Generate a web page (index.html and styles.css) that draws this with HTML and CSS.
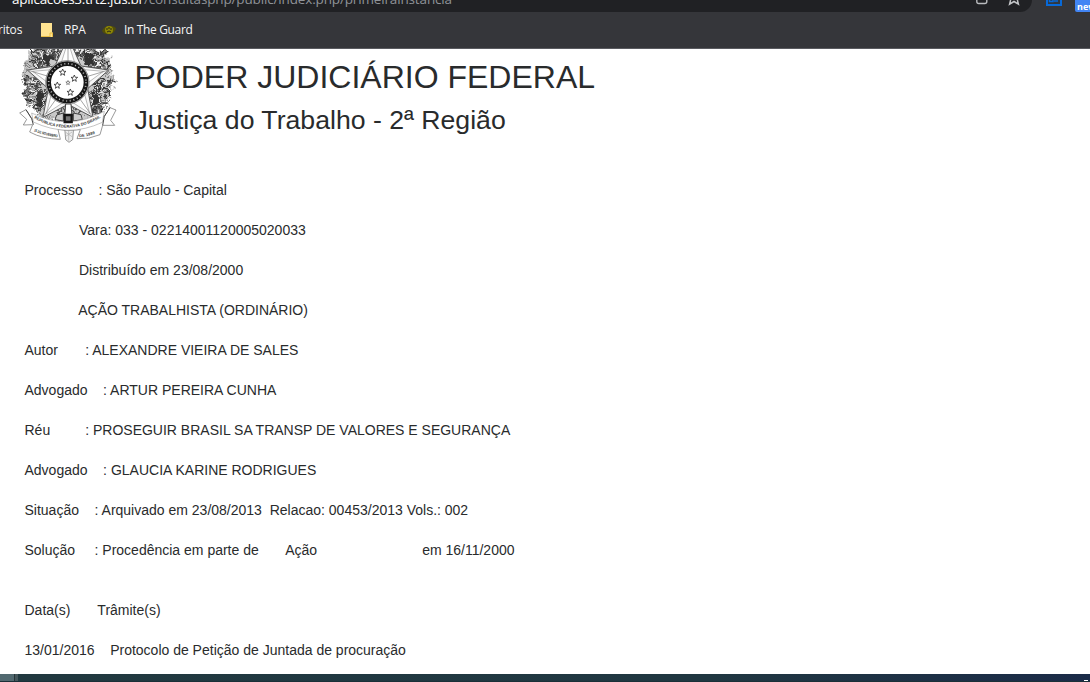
FILE: index.html
```html
<!DOCTYPE html>
<html lang="pt-BR">
<head>
<meta charset="utf-8">
<title>Consulta de Processos</title>
<link rel="stylesheet" href="styles.css">
</head>
<body>
<header class="browser">
  <div class="toolbar">
    <div class="omnibox">
      <div class="url"><span class="host">aplicacoes3.trt2.jus.br</span><span class="path">/consultasphp/public/index.php/primeirainstancia</span></div>
      <svg class="omni-icons" width="60" height="12" viewBox="0 0 60 12"><path d="M3.800 0v1.500q0 2 2 2h6q2 0 2-2V0" fill="none" stroke="#b9bbbe" stroke-width="1.400"/><path d="M37.600 0l-1 4.200 4.400-2.700 4.400 2.700-1-4.200" fill="none" stroke="#c2c4c7" stroke-width="1.500"/></svg>
    </div>
    <svg class="ext" width="16" height="6" viewBox="0 0 16 6"><path d="M0 0h16v6H0z" fill="#0869d8"/><path d="M2 0h12v4H2z" fill="#303841"/><path d="M3.500 0v1.500h3.500V0M9 0v2M11 0v2" stroke="#0869d8" stroke-width="1.500" fill="none"/></svg>
    <div class="new-badge">new</div>
  </div>
  <nav class="bookmarks">
    <span class="bm bm-cut">ritos</span>
    <svg class="folder" width="13" height="14" viewBox="0 0 13 14"><path d="M0 0h11v9.500h1V14H0z" fill="#ffe391"/><path d="M0 13.500h9M9 14V10h2.500V14" stroke="#e9bd45" fill="none"/></svg>
    <span class="bm bm-rpa">RPA</span>
    <svg class="guard" width="14" height="10" viewBox="0 0 14 10"><path d="M0 6Q2 1 7 .8T14 3.500Q12 9 7 9.200T0 6z" fill="#514e0a"/><circle cx="7" cy="5" r="4" fill="#8c8508"/><path d="M4 4h2M8 4h2M5 7l2-1 2 1M7 2v2" stroke="#292a15" fill="none"/></svg>
    <span class="bm bm-guard">In The Guard</span>
  </nav>
</header>
<main class="page">
  <div class="brand">
    <svg class="crest" width="116" height="99" viewBox="0 15 348 297">
      <defs>
        <path id="motto" d="M72 222Q174 283 280 216"/>
        <path id="dateL" d="M71 262Q107 276 148 281"/>
        <path id="dateR" d="M208 280Q235 278 268 264"/>
        <path id="s" d="M0-10L3-3 10-3 4 2 6 9 0 5-6 9-4 2-10-3-3-3z"/>
        <g id="leaf"><path d="M0-83Q20-101 5-134Q-18-108 0-83z" fill="#777" stroke="#333" stroke-width="4"/><path d="M0-87L3-119M-8-105L2-99 12-108" stroke="#eee" stroke-width="4" fill="none"/></g>
        <filter id="rough" x="-10%" y="-10%" width="120%" height="120%"><feTurbulence type="fractalNoise" baseFrequency=".05" numOctaves="2" seed="4"/><feDisplacementMap in="SourceGraphic" scale="42" xChannelSelector="R" yChannelSelector="G"/></filter>
      </defs>
      <g filter="url(#rough)">
      <g fill="none">
        <path d="M52 20H292L310 90 282 180 246 225H102L60 178 38 90z" fill="#c9c9c9"/>
        <circle cx="174" cy="112" r="128" stroke="#777" stroke-width="20" stroke-dasharray="3 6"/>
        <circle cx="174" cy="112" r="88" stroke="#555" stroke-width="30" stroke-dasharray="8 6 5 7"/>
      </g>
      <g transform="translate(174 112)">
        <use href="#leaf" transform="rotate(22)"/><use href="#leaf" transform="rotate(36)"/><use href="#leaf" transform="rotate(49) scale(1.080)"/><use href="#leaf" transform="rotate(62)"/>
        <use href="#leaf" transform="rotate(91)"/><use href="#leaf" transform="rotate(105)"/><use href="#leaf" transform="rotate(119)"/><use href="#leaf" transform="rotate(132)"/>
        <use href="#leaf" transform="rotate(-22)"/><use href="#leaf" transform="rotate(-36)"/><use href="#leaf" transform="rotate(-49) scale(1.080)"/><use href="#leaf" transform="rotate(-62)"/>
        <use href="#leaf" transform="rotate(-91)"/><use href="#leaf" transform="rotate(-105)"/><use href="#leaf" transform="rotate(-119)"/><use href="#leaf" transform="rotate(-132)"/>
      </g>
      <path d="M96 38l28-12 8 22-24 16zM85 150l20 8-12 30-20-12zM226 30l26 10-4 26-22-12zM245 148l18 2 6 26-20 12z" fill="#333"/>
      </g>
      <path d="M174-22L213 66 296 78 233 134 249 220 174 181 99 220 115 134 52 78 135 66z" fill="#f6f6f6" stroke="#555" stroke-width="3"/>
      <path d="M174-8L200 75 280 82 218 128 239 209 174 166 109 209 130 128 68 82 148 75z" fill="#fff" stroke="#999" stroke-width="2"/>
      <path d="M174-22V70M174 115L296 78M174 115L249 220M174 115L99 220M174 115L52 78" stroke="#777" stroke-width="2"/>
      <circle cx="172" cy="115" r="65" fill="#fff" stroke="#555" stroke-width="2"/>
      <circle cx="172" cy="115" r="56" fill="#fff" stroke="#171717" stroke-width="14"/>
      <circle cx="172" cy="115" r="56" fill="none" stroke="#bbb" stroke-width="5" stroke-dasharray="3 8"/>
      <g fill="#fff" stroke="#333" stroke-width="2.500"><use href="#s" x="158" y="85"/><use href="#s" x="193" y="103"/><use href="#s" x="142" y="124"/><use href="#s" x="181" y="145"/><use href="#s" transform="translate(174 116) scale(.65)"/></g>
      <path d="M167 180h16l3 38h-22z" fill="#fff" stroke="#444" stroke-width="3"/>
      <path d="M140 213l20-6v24l-25-4zM190 207l23 5 4 15-27 4z" fill="#ccc" stroke="#444" stroke-width="3"/>
      <path d="M164 251l3 36 10 8 11-8 3-36" fill="#eee" stroke="#666" stroke-width="2"/>
      <path d="M166 264l20 14M186 264l-20 14M176 254v36" stroke="#aaa" stroke-width="2"/>
      <path d="M29 207L48 197 65 224Q174 281 283 217L300 191 318 198 302 229 314 244 278 244 270 272Q236 287 201 284L211 257Q173 262 144 256L151 286Q97 285 59 264L68 242 40 243 50 226z" fill="#fff" stroke="#666" stroke-width="2"/>
      <path d="M65 207Q174 262 283 202L277 235Q174 283 70 234z" fill="#fff" stroke="#888" stroke-width="1.500"/>
      <path d="M48 197L65 224 70 242M300 191L283 217 278 244" fill="none" stroke="#444" stroke-width="3"/>
      <g class="crest-text"><text><textPath href="#motto" textLength="212" lengthAdjust="spacingAndGlyphs">REPUBLICA FEDERATIVA DO BRASIL</textPath></text><text><textPath href="#dateL" textLength="74" lengthAdjust="spacingAndGlyphs">15 DE NOVEMBRO</textPath></text><text><textPath href="#dateR" textLength="49">DE 1889</textPath></text></g>
      <path d="M164 213h21v21h-21z" fill="#777" stroke="#151515" stroke-width="7"/>
    </svg>
    <div class="titles">
      <h1>PODER JUDICIÁRIO FEDERAL</h1>
      <h2>Justiça do Trabalho - 2ª Região</h2>
    </div>
  </div>
  <div class="record">
    <p>Processo    : São Paulo - Capital</p>
    <p>              Vara: 033 - 02214001120005020033</p>
    <p>              Distribuído em 23/08/2000</p>
    <p>              AÇÃO TRABALHISTA (ORDINÁRIO)</p>
    <p>Autor       : ALEXANDRE VIEIRA DE SALES</p>
    <p>Advogado    : ARTUR PEREIRA CUNHA</p>
    <p>Réu         : PROSEGUIR BRASIL SA TRANSP DE VALORES E SEGURANÇA</p>
    <p>Advogado    : GLAUCIA KARINE RODRIGUES</p>
    <p>Situação    : Arquivado em 23/08/2013  Relacao: 00453/2013 Vols.: 002</p>
    <p>Solução     : Procedência em parte de       Ação                           em 16/11/2000</p>
    <p class="history-head">Data(s)       Trâmite(s)</p>
    <p>13/01/2016    Protocolo de Petição de Juntada de procuração</p>
  </div>
</main>
<footer class="taskbar"><span class="start"></span><span class="divider"></span><span class="tray"></span></footer>
</body>
</html>
```
FILE: styles.css
```css
* { box-sizing: border-box; }
body { margin: 0; width: 1090px; height: 682px; overflow: hidden; display: flex; flex-direction: column; background: #fff; color: #292b2c; font-family: "Liberation Sans", Arial, sans-serif; }
svg { display: block; flex: none; }
.browser { height: 49px; flex: none; background: #35363a; border-bottom: 1px solid #5a5b60; font-family: "Open Sans", "Noto Sans", sans-serif; }
.toolbar { display: flex; height: 12px; overflow: hidden; }
.omnibox { display: flex; flex: none; width: 1032px; height: 12px; padding-left: 12px; justify-content: space-between; background: #202124; border-bottom-right-radius: 12px; }
.url { height: 20px; margin-top: -11px; line-height: 20px; font-size: 13.500px; white-space: nowrap; color: #8f9398; }
.host { display: inline-block; width: 132px; color: #fff; letter-spacing: -.28px; }
.path { letter-spacing: -.15px; }
.ext { margin-left: 14px; }
.omni-icons { margin-right: -1px; }
.new-badge { width: 20px; height: 12px; margin-left: 13px; padding-left: 2px; flex: none; background: #4285f4; border-bottom-left-radius: 2px; color: #fff; font-size: 9px; font-weight: 700; line-height: 13px; }
.bookmarks { display: flex; height: 35px; align-items: center; color: #f4f5f6; font-size: 12px; white-space: nowrap; }
.bm { letter-spacing: -.2px; }
.bm-cut { width: 42px; margin-left: -2px; }
.folder { margin: 1px 10px 0 1px; }
.bm-rpa { width: 38px; }
.guard { margin-right: 8px; }
.bm-guard { letter-spacing: -.35px; }
.page { flex: 1; overflow: hidden; }
.brand { display: flex; height: 111px; padding-left: 10px; }
.titles { padding: 10px 0 0 8.500px; }
h1, h2 { margin: 0; font-weight: 400; white-space: nowrap; }
h1 { font-size: 32px; line-height: 37px; }
h2 { margin-top: 8px; font-size: 26.650px; line-height: 32px; }
.crest-text { fill: #333; font-size: 12px; font-weight: 700; }
.record { padding: 20px 0 0 24.500px; font-size: 14px; line-height: 20px; }
.record p { margin: 0 0 20px; white-space: pre; }
.record .history-head { margin-top: 40px; }
.taskbar { display: flex; height: 8px; flex: none; background: linear-gradient(90deg, #213940, #203741 65%, #1b2b48); border-bottom: 1px solid #1b3038; }
.start { width: 14px; background: #526970; }
.divider { width: 4px; background: #44565b; border-left: 1px solid #263438; }
.tray { width: 4px; height: 1px; margin: 6px 2px 0 auto; background: #fff; }
```
